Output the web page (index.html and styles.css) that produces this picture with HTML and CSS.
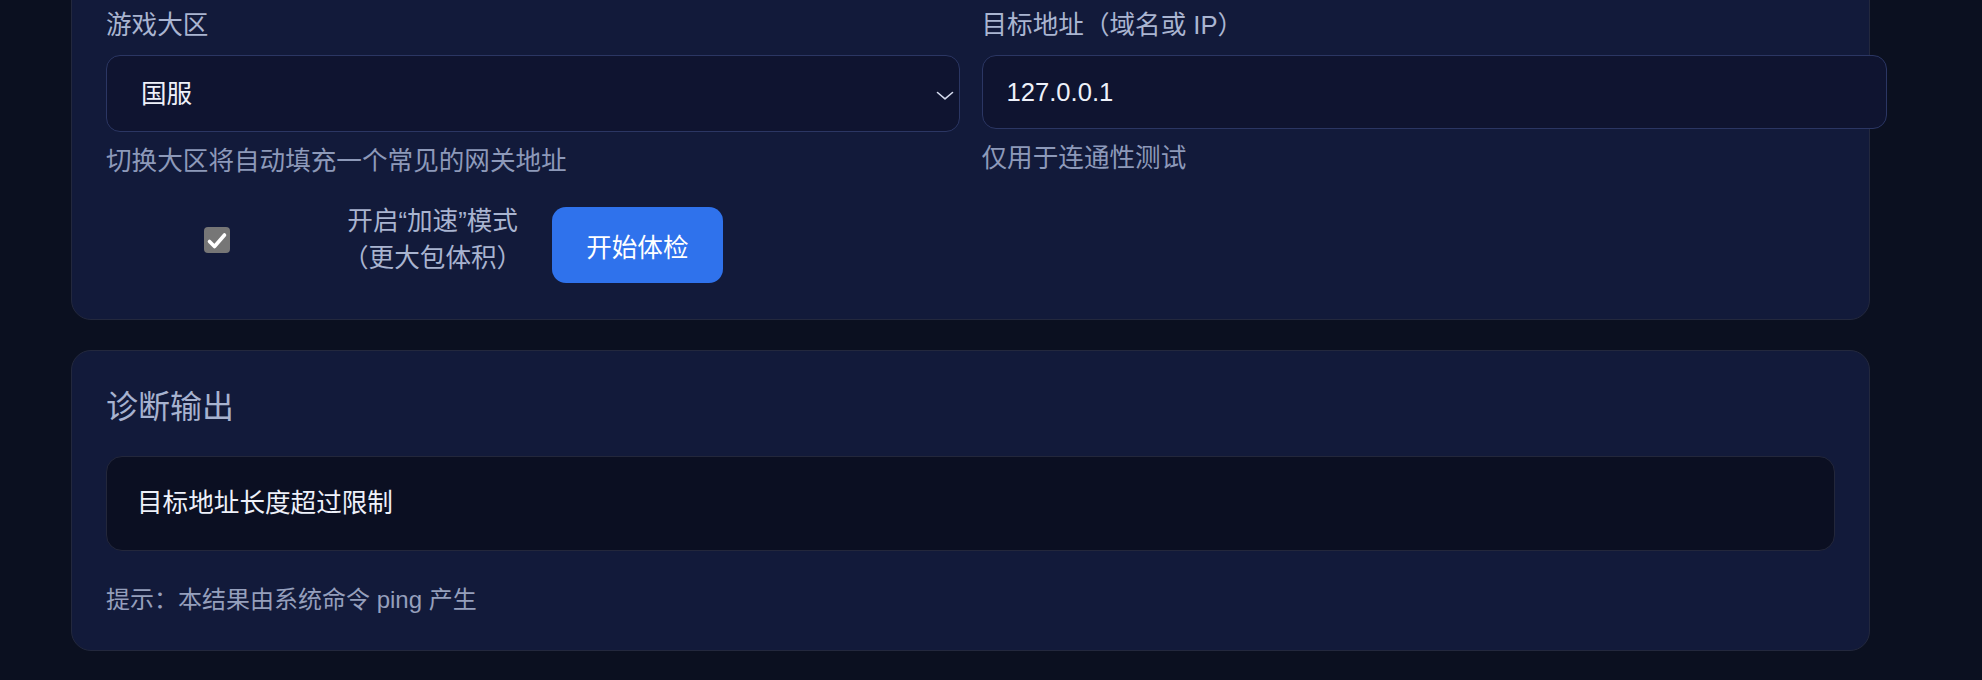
FILE: index.html
```html
<!DOCTYPE html>
<html lang="zh-CN">
<head>
    <meta charset="UTF-8">
    <title>网络体检</title>
    <link rel="stylesheet" href="styles.css">
</head>
<body>
    <div class="page">
        <section class="card form-card">
            <div class="fields">
                <div class="field">
                    <label class="label" for="region">游戏大区</label>
                    <div class="select-wrap">
                        <select class="control select" id="region">
                            <option>国服</option>
                            <option>亚服</option>
                            <option>美服</option>
                            <option>欧服</option>
                        </select>
                        <svg class="chevron" width="18" height="10" viewBox="0 0 18 10">
                            <polyline points="1.5,1.5 9,7.8 16.5,1.5" fill="none" stroke="#d5dbee" stroke-width="1.6" stroke-linecap="round" stroke-linejoin="round"/>
                        </svg>
                    </div>
                    <p class="hint">切换大区将自动填充一个常见的网关地址</p>
                </div>
                <div class="field">
                    <label class="label" for="target">目标地址（域名或 IP）</label>
                    <input class="control input" id="target" type="text" value="127.0.0.1">
                    <p class="hint">仅用于连通性测试</p>
                </div>
            </div>
            <div class="actions">
                <label class="toggle">
                    <span class="check-area">
                        <input class="check-input" type="checkbox" checked>
                        <span class="check-box">
                            <svg width="26" height="26" viewBox="0 0 26 26">
                                <polyline points="5.5,14.5 10.5,19.5 20.5,8" fill="none" stroke="#fff" stroke-width="3.6" stroke-linecap="round" stroke-linejoin="round"/>
                            </svg>
                        </span>
                    </span>
                    <span class="toggle-text">开启“加速”模式<br>（更大包体积）</span>
                </label>
                <button class="btn" type="button">开始体检</button>
            </div>
        </section>

        <section class="card output-card">
            <h2 class="title">诊断输出</h2>
            <div class="output">目标地址长度超过限制</div>
            <p class="hint tip">提示：本结果由系统命令 ping 产生</p>
        </section>
    </div>
</body>
</html>
```

FILE: styles.css
```css
* {
    margin: 0;
    padding: 0;
}
html, body {
    background: #0b1020;
}
body {
    font-family: "Liberation Sans", "Noto Sans CJK SC", sans-serif;
    font-size: 25.6px;
    color: #eef1fa;
    overflow: hidden;
}
/* 页面已向下滚动，第一张卡片顶部在视口外 */
.page {
    margin-top: -29px;
    padding-left: 71px;
}
.card {
    width: 1799px;
    box-sizing: border-box;
    background: #121a3a;
    border: 1px solid #23283d;
    border-radius: 20px;
    padding: 34px 34px 36px;
}
.output-card {
    margin-top: 30px;
    padding-bottom: 31px;
}

/* 表单 */
.fields {
    display: grid;
    grid-template-columns: 1fr 1fr;
    column-gap: 22px;
}
.field {
    display: flex;
    flex-direction: column;
    min-width: 0;
}
.label {
    display: block;
    line-height: 38px;
    color: #aab5d1;
    margin-bottom: 11px;
}
.control {
    font-family: inherit;
    font-size: 25.6px;
    color: #eef1fa;
    background: #0f1430;
    border: 1px solid #2b3663;
    border-radius: 14px;
    outline: none;
}
.select-wrap {
    position: relative;
}
.select {
    -webkit-appearance: none;
    appearance: none;
    display: block;
    width: 100%;
    height: 77px;
    box-sizing: border-box;
    padding: 0 40px 0 34px;
}
.chevron {
    position: absolute;
    right: 6px;
    top: 50%;
    margin-top: -3px;
    pointer-events: none;
}
/* content-box + width 100%，右侧会溢出卡片 */
.input {
    display: block;
    width: 100%;
    height: 72px;
    padding: 0 26px 0 24px;
}
.hint {
    line-height: 38px;
    color: #8d99b9;
    margin-top: 10px;
}

/* 操作区 */
.actions {
    display: flex;
    align-items: flex-start;
    gap: 30px;
    margin-top: 23px;
}
.toggle {
    display: flex;
    align-items: center;
    gap: 15px;
    cursor: pointer;
}
.check-area {
    width: 222px;
    display: flex;
    justify-content: center;
}
.check-input {
    display: none;
}
.check-box {
    width: 26px;
    height: 26px;
    border-radius: 4px;
    background: #767676;
    display: block;
}
.check-box svg {
    display: block;
}
.toggle-text {
    text-align: center;
    line-height: 36.5px;
    color: #a9b4d0;
}
.btn {
    margin-top: 4px;
    height: 76px;
    padding: 0 34px;
    border: none;
    border-radius: 14px;
    background: #2f72ec;
    color: #fff;
    font-family: inherit;
    font-size: 25.6px;
    cursor: pointer;
}

/* 诊断输出 */
.title {
    font-size: 32px;
    font-weight: normal;
    line-height: 44px;
    color: #a7b2cf;
}
.output {
    margin-top: 27px;
    padding: 28px 30px;
    line-height: 37px;
    background: #0b0f22;
    border: 1px solid #23273b;
    border-radius: 16px;
    color: #eef1fa;
}
.tip {
    margin-top: 30px;
    font-size: 24px;
    color: #959fbc;
}
```
